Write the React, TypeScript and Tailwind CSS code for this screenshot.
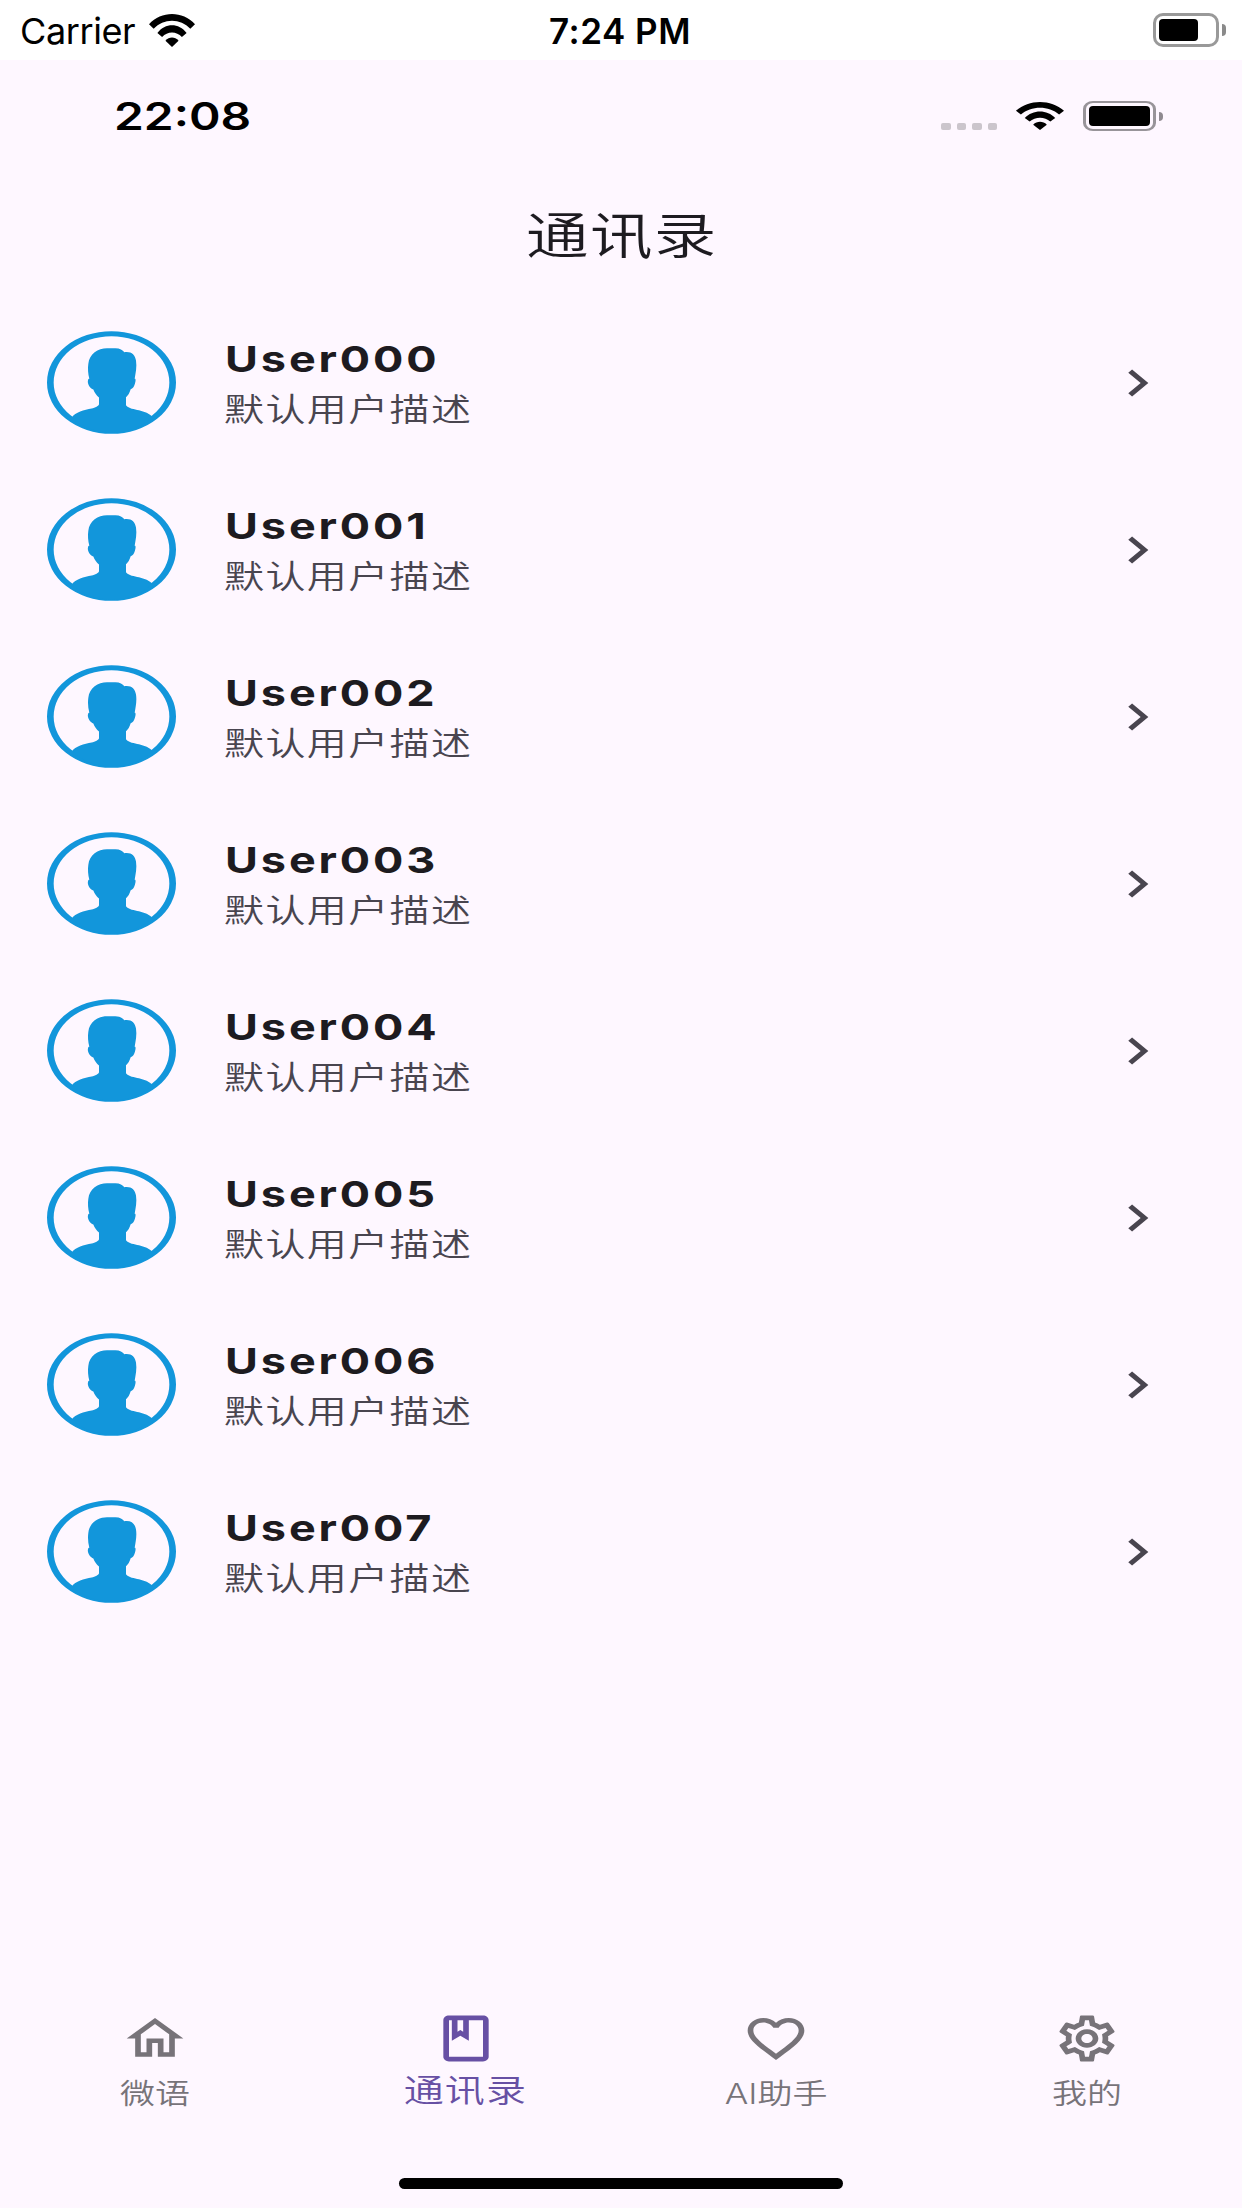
import React from "react";
import type { IconType } from "react-icons";
import {
  MdChevronRight,
  MdFavoriteBorder,
  MdOutlineClass,
  MdOutlineHome,
  MdOutlineSettings,
} from "react-icons/md";

const CONTACTS = ["User000", "User001", "User002", "User003", "User004", "User005", "User006", "User007"];

const TABS: { label: string; icon: IconType; active?: boolean }[] = [
  { label: "微语", icon: MdOutlineHome },
  { label: "通讯录", icon: MdOutlineClass, active: true },
  { label: "AI助手", icon: MdFavoriteBorder },
  { label: "我的", icon: MdOutlineSettings },
];

function WifiIcon({ className }: { className: string }) {
  return (
    <svg viewBox="0 0 137 99" preserveAspectRatio="none" className={className} fill="currentColor">
      <path d="M0 31C37 -10 100 -10 137 31L123 44C94 12 43 12 14 44Z" />
      <path d="M25 57C48 26 89 26 112 57L98 69C82 51 55 51 39 69Z" />
      <path d="M49 80C60 67 77 67 88 80L68.500 99Z" />
    </svg>
  );
}

function Avatar() {
  return (
    <svg viewBox="0 0 387 308" className="h-[103px] w-[129px] shrink-0 text-[#1296db]">
      <path
        fill="currentColor"
        fillRule="evenodd"
        d="M0 154A193.500 154 0 1 1 387 154A193.500 154 0 1 1 0 154ZM20 154A173.500 139 0 1 0 367 154A173.500 139 0 1 0 20 154Z"
      />
      <path
        fill="currentColor"
        d="M75 258C84 244 112 236 134 232C144 229 156 224 156 219V199C149 193 143 186 139 175C130 172 120 158 123 147Q124 142 127 143C123 128 122 112 124 98C127 68 153 51 180 51H205C219 51 227 57 232 63C253 60 264 70 267 88C270 108 266 125 263 143C267 142 266 150 264 157C261 167 257 173 251 174C247 186 243 193 237 198V222C245 232 262 234 276 237C292 241 308 247 317 257C286 287 241 304 193.500 304C146 304 105 286 75 258Z"
      />
    </svg>
  );
}

function CarrierBar() {
  return (
    <div className="grid h-[60px] shrink-0 grid-cols-3 items-center bg-white text-black">
      <div className="flex items-center pl-5">
        <span className="w-[129px] pt-[2px] text-[36px] leading-none tracking-[-0.4px]">Carrier</span>
        <WifiIcon className="h-[33px] w-[46px]" />
      </div>
      <span className="pt-[2px] pr-[2px] text-center text-[35px] leading-none font-semibold tracking-[0.5px]">
        7:24 PM
      </span>
      <div className="flex items-center justify-end gap-[3px] pr-4">
        <div className="h-[34px] w-[66px] rounded-[10px] border-[3px] border-[#999] p-[3px]">
          <div className="h-full w-[39px] rounded-[4px] bg-black" />
        </div>
        <div className="h-3 w-1 rounded-r-full bg-[#8a8a8a]" />
      </div>
    </div>
  );
}

function StatusBar() {
  return (
    <div className="flex h-[112px] shrink-0 items-center justify-between pr-[79px] pl-[114px] text-black">
      <span className="origin-left scale-x-[1.26] text-[38px] leading-none font-semibold">22:08</span>
      <div className="flex items-center">
        <div className="mt-[21px] mr-[19px] flex gap-[6px]">
          {[0, 1, 2, 3].map((dot) => (
            <span key={dot} className="h-[7px] w-[9.500px] rounded-[2px] bg-[#cbc5cc]" />
          ))}
        </div>
        <WifiIcon className="mr-[19px] h-7 w-12" />
        <div className="h-[30px] w-[73px] rounded-[10px/8px] border-x-[3px] border-y-2 border-[#989499] p-[3px]">
          <div className="h-full rounded-[4px] bg-black" />
        </div>
        <div className="ml-[3px] h-[9px] w-1 rounded-r-full bg-[#8f8a90]" />
      </div>
    </div>
  );
}

function ContactRow({ name }: { name: string }) {
  return (
    <li className="flex h-[167px] items-center pr-[72px] pl-[47px]">
      <Avatar />
      <div className="ml-[48px] flex flex-1 flex-col items-start pt-[5px]">
        <span className="ml-px origin-left scale-x-[1.25] text-[36px] leading-[50px] font-bold tracking-[2.3px] text-[#1d1b20]">
          {name}
        </span>
        <span className="origin-left scale-x-[1.25] text-[32px] leading-[52px] font-[350] tracking-[1.1px] text-[#49454f]">
          默认用户描述
        </span>
      </div>
      <MdChevronRight className="h-[54px] w-[65px] text-[#49454f]" preserveAspectRatio="none" />
    </li>
  );
}

function BottomNav() {
  return (
    <nav className="grid h-[162px] shrink-0 grid-cols-4">
      {TABS.map(({ label, icon: Icon, active }) => (
        <button
          key={label}
          type="button"
          className={`flex flex-col items-center ${active ? "text-[#6750a4]" : "text-[#777379]"}`}
        >
          <Icon className="h-[55px] w-[68px]" preserveAspectRatio="none" />
          <span
            className={`scale-x-[1.25] font-[350] whitespace-nowrap ${
              active ? "text-[32px] leading-[50px] tracking-[0.9px]" : "text-[28px] leading-[56px]"
            }`}
          >
            {label}
          </span>
        </button>
      ))}
    </nav>
  );
}

export default function App() {
  return (
    <div className="flex h-[2208px] w-[1242px] flex-col overflow-hidden bg-[#fef7ff] font-['Inter','Noto_Sans_CJK_SC',sans-serif]">
      <CarrierBar />
      <StatusBar />
      <header className="flex h-[127px] shrink-0 items-center justify-center">
        <h1 className="scale-x-[1.25] pl-[2px] text-[50px] leading-none font-[350] tracking-[1.1px] text-[#1d1b20]">
          通讯录
        </h1>
      </header>
      <ul className="flex-1">
        {CONTACTS.map((name) => (
          <ContactRow key={name} name={name} />
        ))}
      </ul>
      <BottomNav />
      <div className="flex h-[35px] shrink-0 justify-center pt-[5px]">
        <div className="h-[11px] w-[444px] rounded-full bg-black" />
      </div>
    </div>
  );
}
